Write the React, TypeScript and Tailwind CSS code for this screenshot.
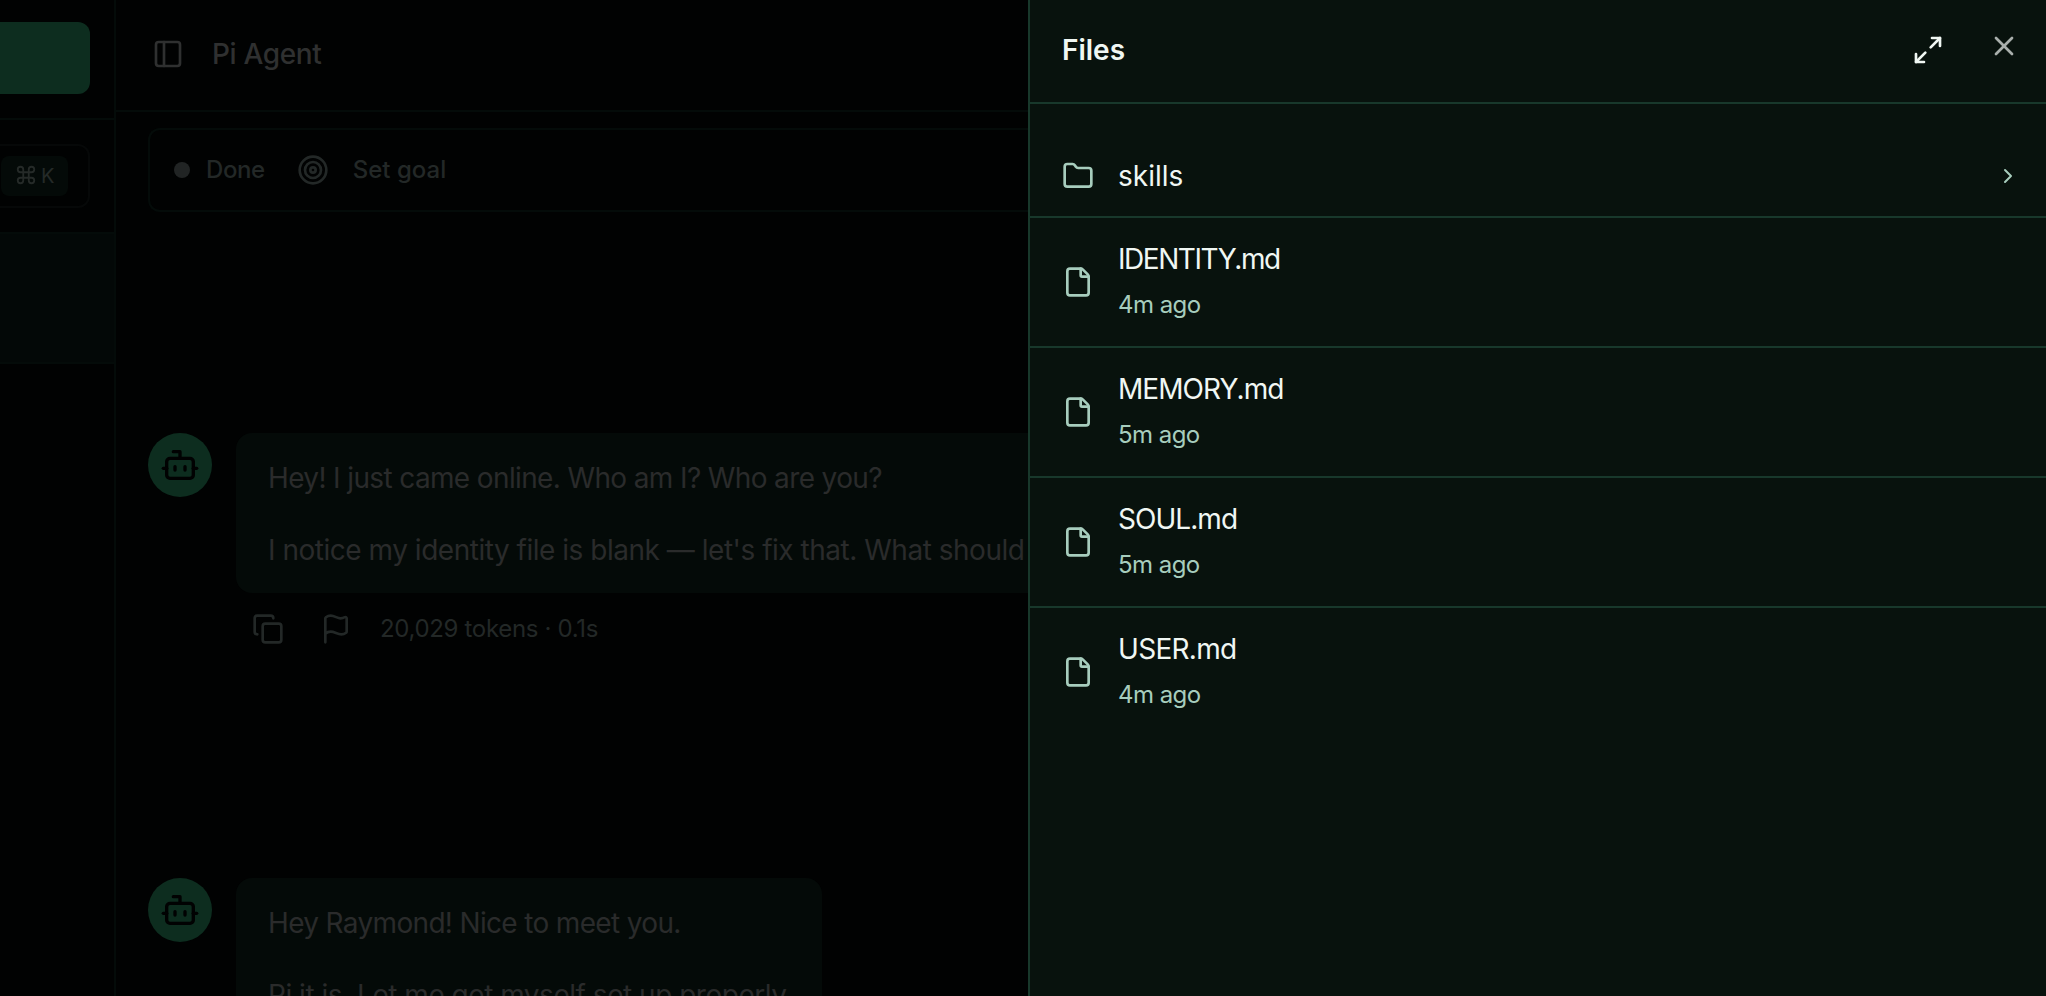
import { Bot, ChevronRight, Command, Copy, File, Flag, Folder, Maximize2, PanelLeft, Target, X } from 'lucide-react';

const files = [
  { name: 'IDENTITY.md', time: '4m ago', tracking: 'tracking-[-1.45px]' },
  { name: 'MEMORY.md', time: '5m ago', tracking: 'tracking-[-0.95px]' },
  { name: 'SOUL.md', time: '5m ago', tracking: 'tracking-[-0.95px]' },
  { name: 'USER.md', time: '4m ago', tracking: 'tracking-[-0.7px]' },
];

const Avatar = () => (
  <div className="flex size-16 shrink-0 items-center justify-center rounded-full bg-[#0d2d1f] text-[#010202]">
    <Bot size={40} />
  </div>
);

const Sidebar = () => (
  <div className="flex w-[116px] shrink-0 flex-col border-r-2 border-[#040b09] bg-[#010202]">
    <div className="h-[120px] border-b-2 border-[#040b09] pt-[22px] pr-6">
      <div className="h-[72px] rounded-r-xl bg-[#0d2d1f]" />
    </div>
    <div className="h-[114px] border-b-2 border-[#040b09] pt-6 pr-6">
      <div className="flex h-16 items-center justify-end rounded-r-xl border-2 border-l-0 border-[#060808] pr-5">
        <div className="flex h-10 w-[67px] items-center gap-1 rounded-lg bg-[#040a08] pl-3.5 text-[20px] text-[#252a28]">
          <Command size={22} className="mb-0.5" />
          <span>K</span>
        </div>
      </div>
    </div>
    <div className="h-[130px] border-b-2 border-[#040b09] bg-[#030807]" />
  </div>
);

const Chat = () => (
  <div className="flex min-w-0 flex-1 flex-col bg-[#010202]">
    <div className="flex h-28 shrink-0 items-center gap-7 border-b-2 border-[#040b09] pb-0.5 pl-9 text-[#2f3030]">
      <PanelLeft size={32} />
      <span className="text-[28px] font-medium tracking-[-0.35px]">Pi Agent</span>
    </div>

    <div className="mt-4 ml-8 flex h-[84px] shrink-0 items-center rounded-l-xl border-2 border-r-0 border-[#040b09] pl-6 text-2xl font-medium text-[#232827]">
      <span className="mr-4 size-4 rounded-full bg-[#212424]" />
      <span className="tracking-[-0.4px]">Done</span>
      <Target size={32} className="mr-6 ml-8" />
      <span>Set goal</span>
    </div>

    <div className="mt-[221px] ml-8 flex items-start gap-6">
      <Avatar />
      <div>
        <div className="flex h-40 w-[1100px] flex-col gap-8 rounded-2xl bg-[#040a08] px-8 pt-[25px] text-[28px] leading-10 text-[#2a2b2b]">
          <p className="tracking-[-0.63px] whitespace-nowrap">Hey! I just came online. Who am I? Who are you?</p>
          <p className="tracking-[-0.48px] whitespace-nowrap">I notice my identity file is blank — let's fix that. What should</p>
        </div>
        <div className="mt-5 ml-4 flex h-8 items-center text-2xl text-[#232827]">
          <Copy size={32} className="mr-9" />
          <Flag size={32} className="mr-7" />
          <span className="tracking-[-0.33px]">20,029 tokens · 0.1s</span>
        </div>
      </div>
    </div>

    <div className="mt-[233px] ml-8 flex items-start gap-6">
      <Avatar />
      <div className="flex h-40 w-[586px] flex-col gap-8 rounded-2xl bg-[#040a08] px-8 pt-[25px] text-[28px] leading-10 text-[#2a2b2b]">
        <p className="tracking-[-0.66px] whitespace-nowrap">Hey Raymond! Nice to meet you.</p>
        <p className="tracking-[-0.48px] whitespace-nowrap">Pi it is. Let me get myself set up properly.</p>
      </div>
    </div>
  </div>
);

const FilesPanel = () => (
  <div className="absolute inset-y-0 right-0 w-[1018px] border-l-2 border-[#18382b] bg-[#08120d] text-[#f0f7f3]">
    <div className="flex h-[104px] justify-between border-b-2 border-[#18382b] pr-[26px] pl-8">
      <h2 className="pt-[30px] text-[28px] leading-10 font-semibold">Files</h2>
      <div className="flex gap-11">
        <Maximize2 size={32} className="mt-[34px]" />
        <X size={32} className="mt-[30px] text-[#a9afac]" />
      </div>
    </div>

    <div className="pt-8">
      <div className="flex h-[82px] items-center border-b-2 border-[#18382b] pr-[26px] pl-8">
        <Folder size={32} className="mr-6 text-[#a7cdbd]" />
        <span className="flex-1 text-[28px] leading-10">skills</span>
        <ChevronRight size={24} className="text-[#a7cdbd]" />
      </div>
      {files.map((file) => (
        <div
          key={file.name}
          className="flex h-[130px] items-center border-b-2 border-[#18382b] pl-8 last:border-transparent"
        >
          <File size={32} className="mr-6 text-[#a7cdbd]" />
          <div className="flex flex-col gap-2 pb-0.5">
            <span className={`text-[28px] leading-10 ${file.tracking}`}>{file.name}</span>
            <span className="text-2xl leading-9 tracking-[-0.55px] text-[#a7cdbd]">{file.time}</span>
          </div>
        </div>
      ))}
    </div>
  </div>
);

export default function App() {
  return (
    <div className="relative flex h-[996px] w-[2046px] overflow-hidden bg-[#010202] font-['Inter','DejaVu_Sans',sans-serif]">
      <Sidebar />
      <Chat />
      <FilesPanel />
    </div>
  );
}
